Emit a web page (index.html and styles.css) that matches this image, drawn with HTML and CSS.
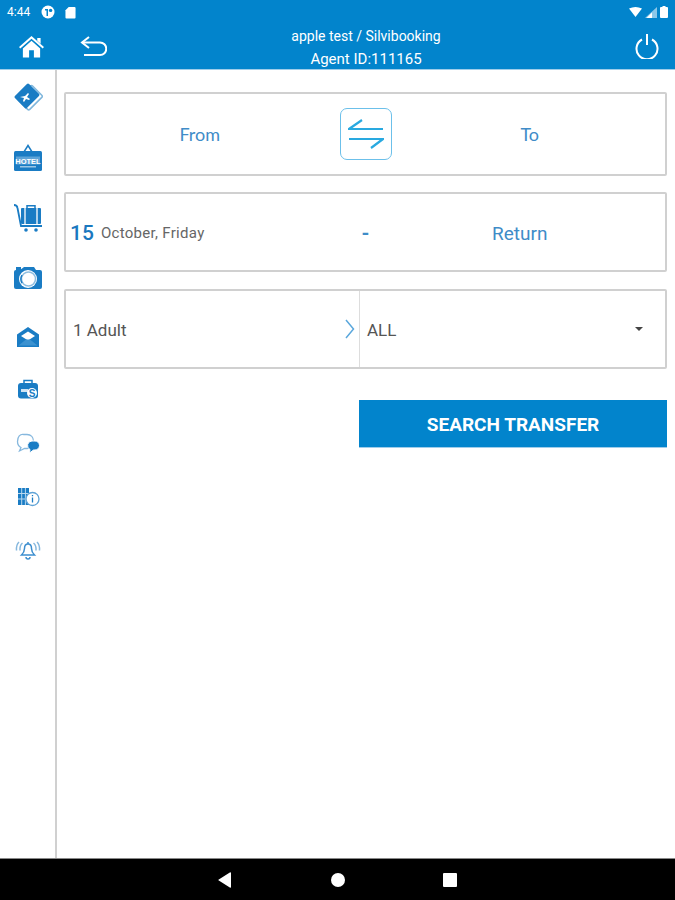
FILE: index.html
```html
<!DOCTYPE html>
<html lang="en">
<head>
    <meta charset="UTF-8">
    <meta name="viewport" content="width=device-width, initial-scale=1.0">
    <title>Transfer search</title>
    <link rel="stylesheet" href="styles.css">
</head>
<body>
    <header class="top">
        <div class="status-bar">
            <div class="status-left">
                <span class="clock">4:44</span>
                <svg class="status-icon" width="14" height="14" viewBox="0 0 14 14"><circle cx="7" cy="7" r="6.5" fill="#fff"/><path d="M4 4h3v7H5.500V5.500H4z" fill="#0284cc"/><circle cx="9.600" cy="5.400" r="1.700" fill="#0284cc"/></svg>
                <svg class="status-icon" width="11" height="13" viewBox="0 0 12 14"><path d="M4 1h6.500q1 0 1 1v10.500q0 1-1 1H1.500q-1 0-1-1V4.500z" fill="#fff"/></svg>
            </div>
            <div class="status-right">
                <svg width="13" height="10" viewBox="0 0 13 10"><path d="M0 1.500Q6.500-1.500 13 1.500L6.500 10z" fill="#fff"/></svg>
                <svg width="12" height="11" viewBox="0 0 12 11"><path d="M12 0v11H0z" fill="#fff" opacity=".55"/><path d="M7 5.500V11H1.500z" fill="#fff"/></svg>
                <svg width="8" height="12" viewBox="0 0 8 12"><path d="M2.500 0h3v1H7q1 0 1 1v9q0 1-1 1H1q-1 0-1-1V2q0-1 1-1h1.500z" fill="#fff"/></svg>
            </div>
        </div>
        <div class="toolbar">
            <div class="home-cell">
                <svg width="27" height="23" viewBox="0 0 28 24"><path d="M1 12.500 14 1l13 11.500-1.300 1.500L14 3.800 2.300 14z" fill="#fff"/><path d="M20 3h3.500v6L20 6z" fill="#fff"/><path d="M5 14 14 6l9 8v9.500h-6.500V16h-5v7.500H5z" fill="#fff"/></svg>
            </div>
            <div class="back-cell">
                <svg width="27" height="21" viewBox="0 0 27 21" fill="none" stroke="#fff" stroke-width="2"><path d="M9 1 2 6.500 9 12"/><path d="M2 6.500h18a6 6 0 0 1 0 12.500H4"/></svg>
            </div>
            <div class="agent">
                <div class="agent-name">apple test / Silvibooking</div>
                <div class="agent-id">Agent ID:111165</div>
            </div>
            <div class="power-cell">
                <svg width="24" height="25" viewBox="0 0 24 25" fill="none" stroke="#fff" stroke-width="2"><path d="M7 5.500a10.500 10.500 0 1 0 10 0"/><path d="M12 0v11"/></svg>
            </div>
        </div>
    </header>

    <div class="page">
        <nav class="side">
            <!-- ticket -->
            <svg width="30" height="30" viewBox="0 0 30 30"><g transform="rotate(45 15 15)"><rect x="9" y="4" width="16" height="20" rx="1.500" fill="#fff" stroke="#7fb6dc" stroke-width="1.500"/><rect x="5" y="5" width="17" height="20" rx="1.500" fill="#1a7cc4"/></g><path d="M7 15l5-1 3-3 1 1-2 3 3 2-1 1-3-1-2 3-1-1 1-3z" fill="#fff"/></svg>
            <!-- hotel -->
            <svg width="30" height="30" viewBox="0 0 30 30"><path d="M15 1 10 9h1.800L15 4l3.200 5H20z" fill="#1a7cc4"/><rect x="1" y="8" width="28" height="20" rx="1.500" fill="#1a7cc4"/><rect x="3" y="13.500" width="24" height="8" fill="#5da4d8"/><text x="15" y="20.500" class="hotel-word">HOTEL</text><rect x="7" y="23" width="16" height="1.500" fill="#9cc6e4"/></svg>
            <!-- luggage cart -->
            <svg width="30" height="30" viewBox="0 0 30 30" fill="none"><path d="M1 2q3 0 3.500 3L8 23h21" stroke="#1a7cc4" stroke-width="1.800"/><rect x="8" y="5" width="20" height="16" rx="1" fill="#1a7cc4"/><path d="M14 5V2.800h8V5" stroke="#1a7cc4" stroke-width="1.500"/><path d="M12 5v16M24 5v16" stroke="#fff" stroke-width="1.300"/><circle cx="13" cy="27" r="1.800" fill="#1a7cc4"/><circle cx="23" cy="27" r="1.800" fill="#1a7cc4"/></svg>
            <!-- camera -->
            <svg width="30" height="30" viewBox="0 0 30 30"><rect x="1" y="6" width="28" height="19" rx="2" fill="#1a7cc4"/><rect x="3" y="3" width="5" height="3" fill="#1a7cc4"/><path d="M7 6h16l-2-3H11z" fill="#1a7cc4"/><circle cx="15" cy="15" r="9" fill="#fff"/><circle cx="15.500" cy="15" r="7" fill="none" stroke="#8fbee0" stroke-width="1.500"/><path d="M9 11a8 8 0 0 0 0 8" fill="none" stroke="#1a7cc4" stroke-width="1.500"/></svg>
            <!-- open envelope -->
            <svg width="30" height="30" viewBox="0 0 30 30"><path d="M4 12.500 15 5l11 7.500v12.500H4z" fill="#1a7cc4"/><path d="M8 14 15 9.500l7 4.500-7 4.500z" fill="#fff"/><path d="M5.500 23.500l7.500-6h4l7.500 6z" fill="#3c92d0"/></svg>
            <!-- wallet / case -->
            <svg width="30" height="30" viewBox="0 0 30 30"><path d="M11 8V5.500h8V8" fill="none" stroke="#1a7cc4" stroke-width="1.500"/><rect x="5" y="8" width="20" height="15.500" rx="3" fill="#1a7cc4"/><path d="M8 14h7v3H8z" fill="#cfe3f3"/><circle cx="19" cy="18" r="5" fill="#fff"/><text x="19" y="21.500" class="case-mark">S</text></svg>
            <!-- chat -->
            <svg width="30" height="30" viewBox="0 0 30 30" fill="none"><path d="M8 18.500l-1.500 3.500 5-2.500h2.500c4 0 6.500-3 6.500-7s-2.500-7-6.500-7h-3C7 4.500 4.500 8 4.500 12.500c0 2.500 1.300 5 3.500 6z" stroke="#86b8de" stroke-width="1.300"/><path d="M17 20.500l-.5 3.500 4-3h1.500a4.500 4.500 0 0 0 0-9h-3a4.500 4.500 0 0 0-2 8.500z" fill="#1a7cc4" stroke="#fff"/></svg>
            <!-- building info -->
            <svg width="30" height="30" viewBox="0 0 30 30"><rect x="5" y="6" width="11" height="17" fill="#1a7cc4"/><path d="M8.700 6v17M12.400 6v17M5 11.500h11M5 17h11" stroke="#b9d8ee"/><circle cx="19.500" cy="17" r="6.500" fill="#fff" stroke="#5fa3d6" stroke-width="1.300"/><path d="M19.500 15.500v5M19.500 13v1.300" stroke="#1a7cc4" stroke-width="1.300"/></svg>
            <!-- bell -->
            <svg width="30" height="30" viewBox="0 0 30 30" fill="none" stroke="#3d8fcf" stroke-width="1.500"><path d="M15 9c-2.500 0-3.500 2-3.500 4.500 0 3-1.500 5-3 6.500h13c-1.500-1.500-3-3.500-3-6.500C18.500 11 17.500 9 15 9z"/><path d="M13 22a2 2 0 0 0 4 0M15 7v2"/><path d="M9.500 8Q6.500 10.500 7 15.500M6 7Q3 10 3.500 15.500M20.500 8q3 2.500 2.500 7.500M24 7q3 3 2.500 8.500" stroke="#86b8de"/></svg>
        </nav>

        <main class="content">
            <section class="card route-card">
                <div class="route-label route-from">From</div>
                <div class="swap">
                    <svg width="36" height="30" viewBox="0 0 36 30" fill="none" stroke="#29a9e0" stroke-width="2.200"><path d="M14 1 1 10h34"/><path d="M23 29 35 20H1"/></svg>
                </div>
                <div class="route-label">To</div>
            </section>

            <section class="card date-card">
                <div class="date">
                    <span class="date-day">15</span>
                    <span class="date-text">October, Friday</span>
                </div>
                <div class="date-dash">-</div>
                <div class="date-return">Return</div>
            </section>

            <section class="card pax-card">
                <div class="pax">
                    <span>1 Adult</span>
                    <svg width="10" height="20" viewBox="0 0 10 20" fill="none" stroke="#5aa7dc" stroke-width="1.500"><path d="M1 1l7.500 9L1 19"/></svg>
                </div>
                <div class="filter">
                    <span>ALL</span>
                    <span class="caret"></span>
                </div>
            </section>

            <div class="actions">
                <button class="search-btn" type="button">SEARCH TRANSFER</button>
            </div>
        </main>
    </div>

    <footer class="nav-bar">
        <svg width="14" height="16" viewBox="0 0 14 16"><path d="M13 1v14a.8.8 0 0 1-1.200.6L.8 8.600a.7.7 0 0 1 0-1.200L11.800.4A.8.8 0 0 1 13 1z" fill="#fff"/></svg>
        <span class="nav-dot"></span>
        <span class="nav-square"></span>
    </footer>
</body>
</html>
```

FILE: styles.css
```css
:root {
    --brand: #0284cc;
    --border: #d0d0d0;
    --link: #3f8cc8;
}
html, body {
    height: 100%;
}
body {
    margin: 0;
    display: flex;
    flex-direction: column;
    overflow: hidden;
    background-color: #fff;
    font-family: Roboto, "Liberation Sans", sans-serif;
    color: #555;
}
.top {
    height: 69px;
    background-color: var(--brand);
    border-bottom: 1px solid #9fcdea;
    color: #fff;
    flex: none;
}
.status-bar {
    height: 24px;
    display: flex;
    justify-content: space-between;
    align-items: center;
    padding: 0 7px;
}
.status-left {
    display: flex;
    align-items: center;
    gap: 10px;
}
.clock {
    font-size: 12px;
    width: 24px;
}
.status-right {
    display: flex;
    align-items: center;
    gap: 3px;
}
.toolbar {
    height: 45px;
    display: grid;
    grid-template-columns: 57px 60px 1fr 60px;
    grid-template-rows: 45px;
    align-items: center;
}
.home-cell {
    display: flex;
    justify-content: center;
    padding-left: 5px;
}
.back-cell {
    padding-left: 23px;
    display: flex;
}
.power-cell {
    padding-left: 20px;
    display: flex;
}
.agent {
    text-align: center;
    padding-top: 2px;
}
.agent-name {
    font-size: 14px;
    line-height: 23px;
}
.agent-id {
    font-size: 15px;
    line-height: 23px;
}
.page {
    flex: 1;
    display: flex;
    min-height: 0;
}
.side {
    width: 55px;
    flex: none;
    border-right: 2px solid var(--border);
    display: grid;
    grid-template-rows: 61px 60px 61px 58px 53px 54px 53px 53px 30px;
    justify-items: center;
    align-content: start;
    padding-top: 12px;
}
.side svg {
    margin-left: 1px;
}
.hotel-word {
    font-family: "Liberation Sans", sans-serif;
    font-size: 7.500px;
    font-weight: 700;
    fill: #fff;
    text-anchor: middle;
}
.case-mark {
    font-family: "Liberation Sans", sans-serif;
    font-size: 10px;
    font-weight: 700;
    fill: #1a7cc4;
    text-anchor: middle;
}
.content {
    flex: 1;
    padding: 22px 8px 0 7px;
    display: flex;
    flex-direction: column;
}
.card {
    border: 2px solid var(--border);
    border-radius: 2px;
    box-sizing: border-box;
}
.route-card {
    height: 84px;
    display: grid;
    grid-template-columns: 1fr 58px 1fr;
    align-items: center;
}
.route-label {
    text-align: center;
    font-family: Lato, sans-serif;
    font-size: 18px;
    color: var(--link);
}
.route-from {
    padding-right: 3px;
}
.swap {
    width: 52px;
    height: 52px;
    box-sizing: border-box;
    justify-self: center;
    border: 1px solid #6cc0ea;
    border-radius: 7px;
    display: flex;
    align-items: center;
    justify-content: center;
}
.date-card {
    height: 80px;
    margin-top: 16px;
    padding-top: 2px;
    display: grid;
    grid-template-columns: 1fr 58px 1fr;
    align-items: center;
}
.date {
    display: flex;
    align-items: center;
    gap: 7px;
    padding-left: 4px;
}
.date-day {
    font-size: 21px;
    font-weight: 500;
    color: #1a78bf;
}
.date-text {
    font-size: 15px;
    letter-spacing: .3px;
    color: #666;
}
.date-dash {
    text-align: center;
    font-size: 20px;
    font-weight: 700;
    color: var(--link);
}
.date-return {
    text-align: center;
    padding-right: 20px;
    font-size: 19px;
    color: var(--link);
}
.pax-card {
    height: 80px;
    margin-top: 17px;
    display: grid;
    grid-template-columns: 294px 1fr;
    font-size: 17px;
}
.pax {
    display: flex;
    align-items: center;
    justify-content: space-between;
    padding: 2px 4px 0 7px;
    border-right: 1px solid #ddd;
}
.pax svg {
    margin-top: -2px;
}
.filter {
    display: flex;
    align-items: center;
    justify-content: space-between;
    padding: 2px 22px 0 7px;
}
.caret {
    width: 0;
    height: 0;
    margin-top: -2px;
    border-left: 4.500px solid transparent;
    border-right: 4.500px solid transparent;
    border-top: 4px solid #444;
}
.actions {
    display: flex;
    justify-content: flex-end;
    margin-top: 31px;
}
.search-btn {
    width: 308px;
    height: 48px;
    border: 0;
    border-bottom: 1px solid #9fcdea;
    padding-top: 3px;
    background-color: var(--brand);
    color: #fff;
    font-family: Roboto, sans-serif;
    font-size: 19px;
    font-weight: 700;
}
.nav-bar {
    height: 42px;
    flex: none;
    background-color: #000;
    border-top: 1px solid #888;
    display: grid;
    grid-template-columns: 1fr 1fr 1fr;
    padding: 0 218px;
    box-sizing: border-box;
    align-items: center;
    justify-items: center;
}
.nav-bar svg {
    justify-self: start;
}
.nav-dot {
    width: 14px;
    height: 14px;
    border-radius: 50%;
    margin-left: 1px;
    background-color: #fff;
}
.nav-square {
    width: 14px;
    height: 14px;
    border-radius: 1px;
    background-color: #fff;
    justify-self: end;
}
```
